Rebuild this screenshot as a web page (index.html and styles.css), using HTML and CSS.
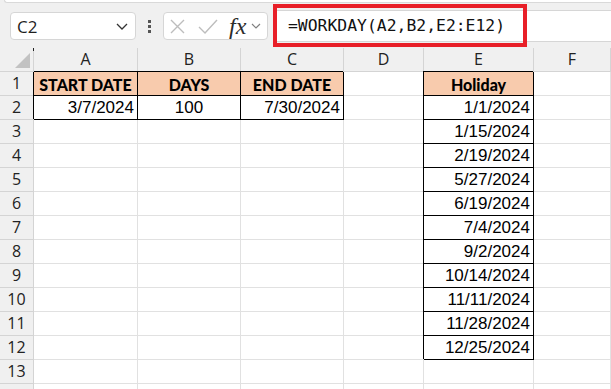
FILE: index.html
```html
<!DOCTYPE html>
<html lang="en">
<head>
    <meta charset="UTF-8">
    <meta name="viewport" content="width=device-width, initial-scale=1.0">
    <title>WORKDAY</title>
    <link rel="stylesheet" href="styles.css">
</head>
<body>
    <div class="toolbar">
        <div class="ribbon-edge"></div>
        <div class="formula-row">
            <div class="name-box">
                <span>C2</span>
                <svg width="12" height="7" viewBox="0 0 12 7"><polyline points="1,1 6,6 11,1" fill="none" stroke="#333" stroke-width="1.3"/></svg>
            </div>
            <div class="grip"><span></span><span></span><span></span></div>
            <div class="fx-box">
                <svg class="icon-x" width="15" height="15" viewBox="0 0 15 15"><path d="M1 1 L14 14 M14 1 L1 14" stroke="#bdbdbd" stroke-width="1.4" fill="none"/></svg>
                <svg class="icon-check" width="20" height="15" viewBox="0 0 20 15"><polyline points="1,8 7,14 19,1" fill="none" stroke="#bdbdbd" stroke-width="1.4"/></svg>
                <span class="fx">fx</span>
                <svg class="icon-more" width="10" height="6" viewBox="0 0 10 6"><polyline points="1,1 5,5 9,1" fill="none" stroke="#808080" stroke-width="1.2"/></svg>
            </div>
            <div class="formula-input">=WORKDAY(A2,B2,E2:E12)</div>
        </div>
        <div class="highlight"></div>
    </div>

    <div class="sheet">
        <div class="ch corner"><svg width="16" height="16" viewBox="0 0 16 16"><polygon points="15,0 15,15 0,15" fill="#c2c2c2"/></svg></div>
        <div class="ch">A</div><div class="ch">B</div><div class="ch">C</div><div class="ch">D</div><div class="ch">E</div><div class="ch">F</div>

        <div class="rh">1</div>
        <div class="c b hd">START DATE</div><div class="c b hd">DAYS</div><div class="c b hd">END DATE</div><div class="c"></div><div class="c b hd">Holiday</div><div class="c"></div>

        <div class="rh">2</div>
        <div class="c b num">3/7/2024</div><div class="c b mid">100</div><div class="c b num">7/30/2024</div><div class="c"></div><div class="c b num">1/1/2024</div><div class="c"></div>

        <div class="rh">3</div>
        <div class="c"></div><div class="c"></div><div class="c"></div><div class="c"></div><div class="c b num">1/15/2024</div><div class="c"></div>

        <div class="rh">4</div>
        <div class="c"></div><div class="c"></div><div class="c"></div><div class="c"></div><div class="c b num">2/19/2024</div><div class="c"></div>

        <div class="rh">5</div>
        <div class="c"></div><div class="c"></div><div class="c"></div><div class="c"></div><div class="c b num">5/27/2024</div><div class="c"></div>

        <div class="rh">6</div>
        <div class="c"></div><div class="c"></div><div class="c"></div><div class="c"></div><div class="c b num">6/19/2024</div><div class="c"></div>

        <div class="rh">7</div>
        <div class="c"></div><div class="c"></div><div class="c"></div><div class="c"></div><div class="c b num">7/4/2024</div><div class="c"></div>

        <div class="rh">8</div>
        <div class="c"></div><div class="c"></div><div class="c"></div><div class="c"></div><div class="c b num">9/2/2024</div><div class="c"></div>

        <div class="rh">9</div>
        <div class="c"></div><div class="c"></div><div class="c"></div><div class="c"></div><div class="c b num">10/14/2024</div><div class="c"></div>

        <div class="rh">10</div>
        <div class="c"></div><div class="c"></div><div class="c"></div><div class="c"></div><div class="c b num">11/11/2024</div><div class="c"></div>

        <div class="rh">11</div>
        <div class="c"></div><div class="c"></div><div class="c"></div><div class="c"></div><div class="c b num">11/28/2024</div><div class="c"></div>

        <div class="rh">12</div>
        <div class="c"></div><div class="c"></div><div class="c"></div><div class="c"></div><div class="c b num">12/25/2024</div><div class="c"></div>

        <div class="rh">13</div>
        <div class="c"></div><div class="c"></div><div class="c"></div><div class="c"></div><div class="c"></div><div class="c"></div>

        <div class="rh"></div>
        <div class="c"></div><div class="c"></div><div class="c"></div><div class="c"></div><div class="c"></div><div class="c"></div>
    </div>
</body>
</html>
```

FILE: styles.css
```css
body {
    margin: 0;
    width: 611px;
    height: 389px;
    overflow: hidden;
    background-color: #f0f0f0;
    font-family: "Liberation Sans", Arial, sans-serif;
}

/* formula bar */

.toolbar {
    position: relative;
    height: 48px;
}

.ribbon-edge {
    height: 2px;
    margin-left: 4px;
    background-color: #fff;
    border: 1px solid #d9d9d9;
    border-top: none;
    border-right: none;
    border-radius: 0 0 0 6px;
}

.formula-row {
    display: flex;
    align-items: center;
    height: 32px;
    margin-top: 7px;
}

.name-box {
    display: flex;
    align-items: center;
    justify-content: space-between;
    box-sizing: border-box;
    width: 126px;
    height: 28px;
    margin-left: 10px;
    padding: 0 7px 0 6px;
    background-color: #fff;
    border: 1px solid #d6d6d6;
    border-radius: 4px;
    font-family: "Open Sans", sans-serif;
    font-size: 17px;
    color: #1f1f1f;
}

.grip {
    display: flex;
    flex-direction: column;
    gap: 2px;
    margin-left: 12px;
}

.grip span {
    width: 3px;
    height: 3px;
    background-color: #555;
}

.fx-box {
    display: flex;
    align-items: center;
    box-sizing: border-box;
    width: 105px;
    height: 28px;
    margin-left: 12px;
    padding-left: 6px;
    background-color: #fff;
    border: 1px solid #d6d6d6;
    border-radius: 4px;
}

.icon-check {
    margin-left: 13px;
}

.fx {
    margin-left: 11px;
    font-family: "Liberation Serif", serif;
    font-style: italic;
    font-size: 24px;
    line-height: 22px;
    color: #2b2b2b;
}

.icon-more {
    margin-left: 5px;
}

.formula-input {
    flex: 1;
    box-sizing: border-box;
    height: 32px;
    margin-left: 5px;
    padding-left: 14px;
    background-color: #fff;
    border: 1px solid #d6d6d6;
    border-right: none;
    font-family: "DejaVu Sans Mono", "Liberation Mono", monospace;
    font-size: 16.4px;
    line-height: 30px;
    color: #111;
}

.highlight {
    position: absolute;
    left: 273px;
    top: 4px;
    width: 254px;
    height: 43px;
    box-sizing: border-box;
    border: 4px solid #e81f28;
}

/* grid */

.sheet {
    display: grid;
    grid-template-columns: 34px 104px 103px 103px 80px 110px 1fr;
    grid-auto-rows: 24px;
}

.ch, .rh {
    box-sizing: border-box;
    background-color: #f0f0f0;
    border-right: 1px solid #d4d4d4;
    border-bottom: 1px solid #d4d4d4;
    font-family: "Open Sans", sans-serif;
    font-size: 16px;
    line-height: 23px;
    text-align: center;
    color: #222;
}

.corner {
    position: relative;
    display: flex;
    justify-content: flex-end;
    align-items: flex-end;
    padding: 0 2px 2px 0;
}

.corner svg {
    display: block;
}

.corner::after {
    content: "";
    position: absolute;
    top: 0;
    right: -1px;
    width: 1px;
    height: 3px;
    background-color: #222;
}

.c {
    box-sizing: border-box;
    background-color: #fff;
    border-right: 1px solid #e1e1e1;
    border-bottom: 1px solid #e1e1e1;
    padding: 0 3px;
    font-size: 17px;
    line-height: 23px;
    white-space: nowrap;
    overflow: hidden;
    color: #000;
}

.c.b {
    border-right-color: #000;
    border-bottom-color: #000;
    box-shadow: -1px -1px 0 0 #000;
}

.hd {
    background-color: #f8cbad;
    font-family: Lato, sans-serif;
    font-size: 16px;
    font-weight: 900;
    text-align: center;
    padding-top: 1px;
}

.num {
    text-align: right;
}

.mid {
    text-align: center;
}
```
